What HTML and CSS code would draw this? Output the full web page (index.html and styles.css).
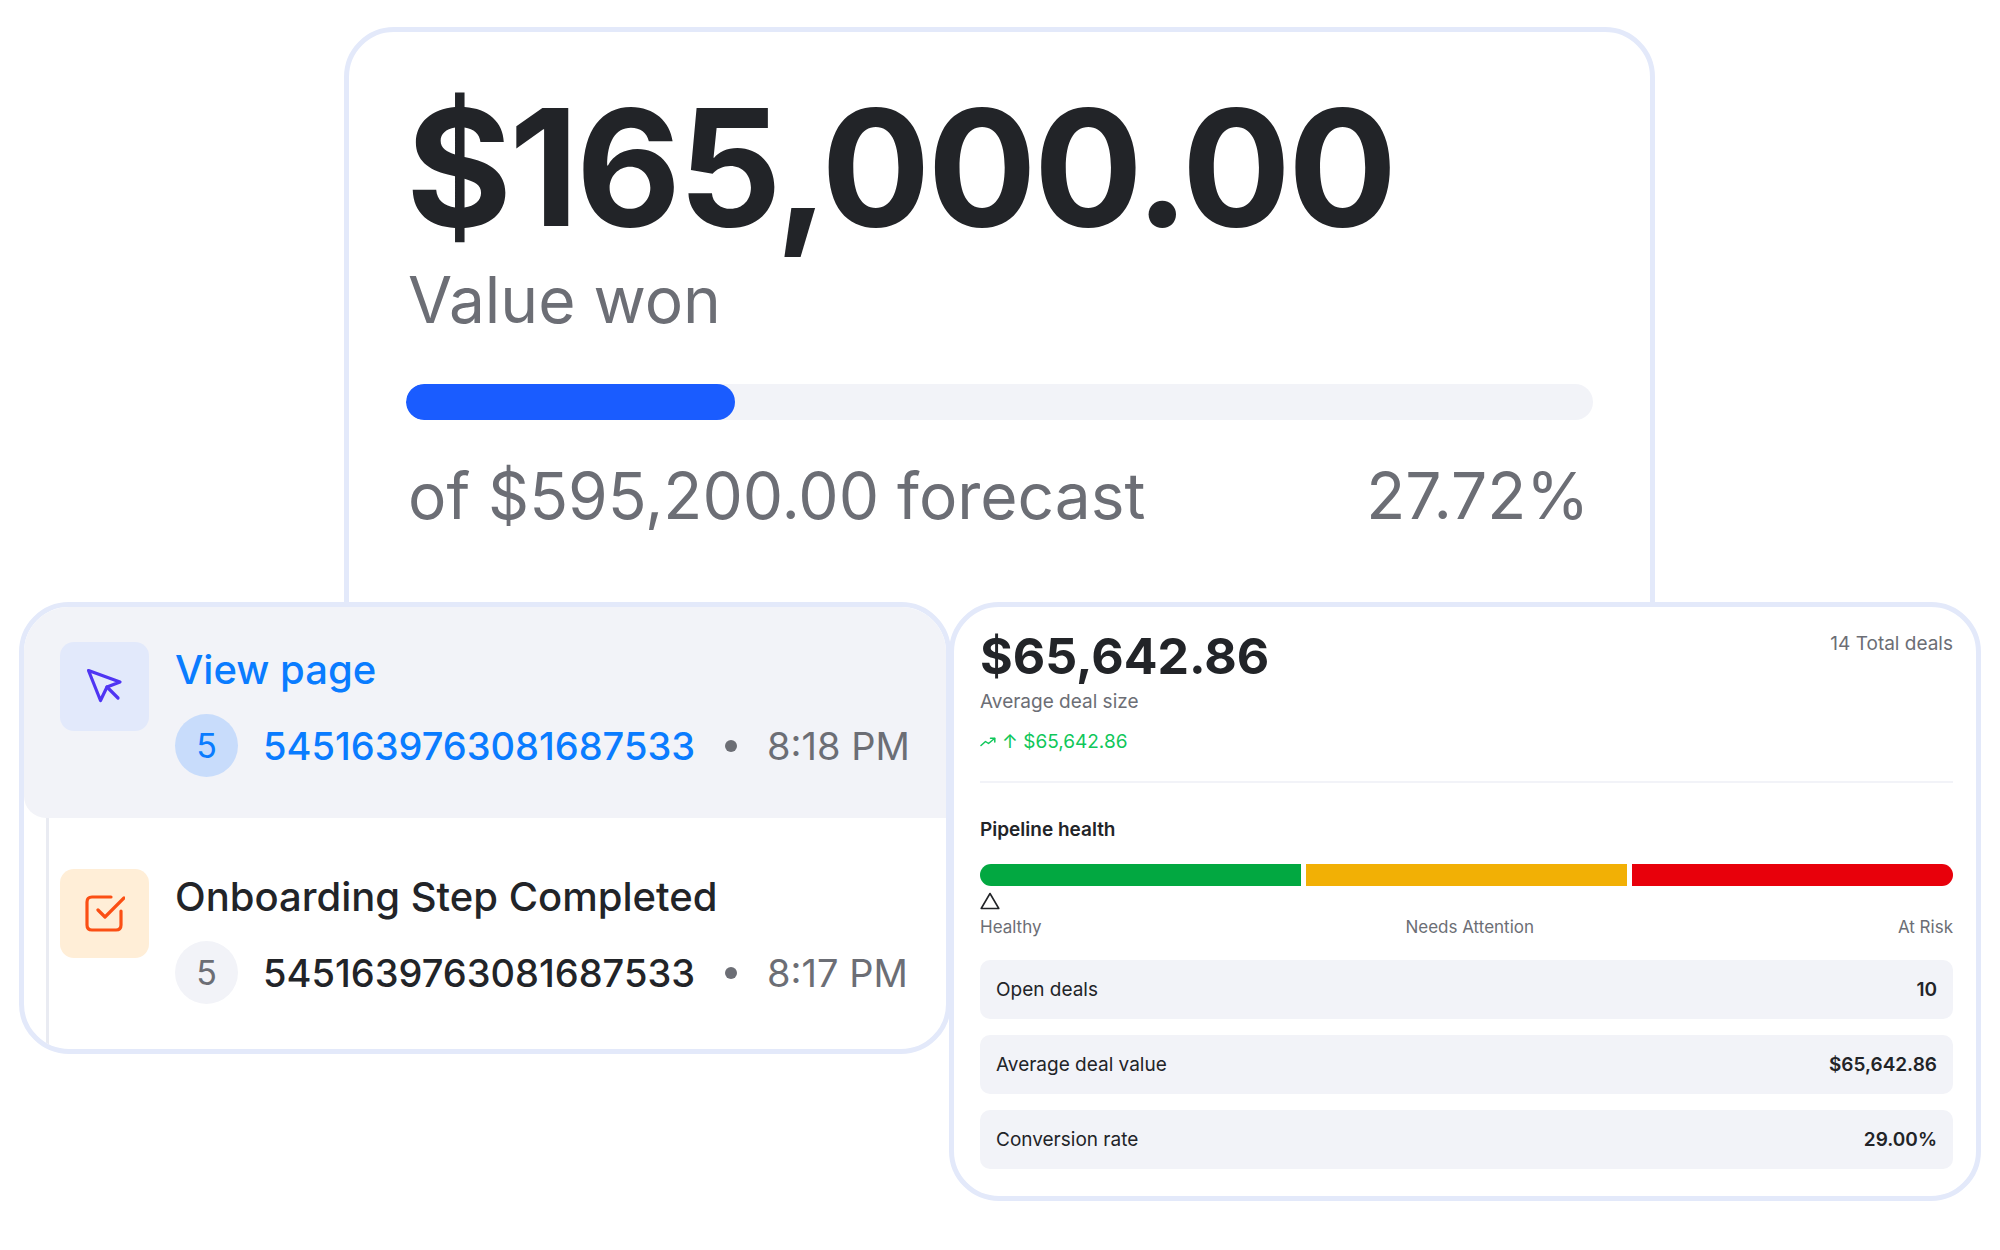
FILE: index.html
```html
<!DOCTYPE html>
<html lang="en">
<head>
  <meta charset="UTF-8" />
  <title>Deals overview</title>
  <link rel="stylesheet" href="styles.css">
</head>
<body>
  <div class="canvas">

    <!-- forecast card, sits behind the other two -->
    <section class="card forecast">
      <div class="won-value">$165,000.00</div>
      <div class="won-label">Value won</div>
      <div class="progress"><div class="progress-fill" style="width: 27.72%"></div></div>
      <div class="forecast-row">
        <span>of $595,200.00 forecast</span>
        <span>27.72%</span>
      </div>
    </section>

    <!-- activity card -->
    <section class="card activity">
      <div class="event event-active">
        <div class="event-icon icon-blue">
          <svg width="40" height="40" viewBox="0 0 40 40" fill="none" stroke="#4f35f3" stroke-width="3.2" stroke-linecap="round" stroke-linejoin="round">
            <path d="M3.5 3.5 L35 15 L22 20 L15.5 33.5 Z"/>
            <path d="M22 20 L33 31"/>
          </svg>
        </div>
        <div class="event-body">
          <div class="event-title link">View page</div>
          <div class="event-meta">
            <span class="count count-blue">5</span>
            <span class="event-id link">5451639763081687533</span>
            <span class="dot"></span>
            <span class="event-time">8:18 PM</span>
          </div>
        </div>
      </div>
      <div class="event">
        <div class="event-icon icon-orange">
          <svg width="40" height="40" viewBox="0 0 40 40" fill="none" stroke="#fb4f14" stroke-width="3.2" stroke-linecap="round" stroke-linejoin="round">
            <path d="M26 3 H7 Q2 3 2 8 V31 Q2 36 7 36 H31 Q36 36 36 31 V17"/>
            <path d="M13 16 L20 23 L39 4"/>
          </svg>
        </div>
        <div class="event-body">
          <div class="event-title">Onboarding Step Completed</div>
          <div class="event-meta">
            <span class="count">5</span>
            <span class="event-id">5451639763081687533</span>
            <span class="dot"></span>
            <span class="event-time">8:17 PM</span>
          </div>
        </div>
      </div>
    </section>

    <!-- deal stats card -->
    <section class="card stats">
      <div class="stats-head">
        <div>
          <div class="stats-value">$65,642.86</div>
          <div class="stats-label">Average deal size</div>
          <div class="stats-trend">
            <svg width="16" height="10" viewBox="0 0 16 10" fill="none" stroke="#0fc75a" stroke-width="1.5" stroke-linecap="round" stroke-linejoin="round">
              <path d="M1 8.5 L5.5 4.5 L8.5 6.5 L14.5 1.5"/>
              <path d="M10.5 1.2 H14.8 V5"/>
            </svg>
            <span>↑ $65,642.86</span>
          </div>
        </div>
        <div class="stats-total">14 Total deals</div>
      </div>

      <div class="health-title">Pipeline health</div>
      <div class="health-bar">
        <div class="seg seg-green"></div>
        <div class="seg seg-amber"></div>
        <div class="seg seg-red"></div>
      </div>
      <svg class="marker" width="20" height="18" viewBox="0 0 20 18" fill="none" stroke="#222428" stroke-width="1.6" stroke-linejoin="round">
        <path d="M10 1.5 L18.8 16.5 H1.2 Z"/>
      </svg>
      <div class="health-labels">
        <span>Healthy</span>
        <span>Needs Attention</span>
        <span>At Risk</span>
      </div>

      <div class="stat-rows">
        <div class="stat-row"><span>Open deals</span><b>10</b></div>
        <div class="stat-row"><span>Average deal value</span><b>$65,642.86</b></div>
        <div class="stat-row"><span>Conversion rate</span><b>29.00%</b></div>
      </div>
    </section>

  </div>
</body>
</html>
```

FILE: styles.css
```css
* { margin: 0; padding: 0; box-sizing: border-box; }

body {
  font-family: 'Inter', 'Liberation Sans', sans-serif;
  background: #fff;
  color: #222428;
}

.canvas {
  position: relative;
  width: 2000px;
  height: 1250px;
  overflow: hidden;
}

.card {
  position: absolute;
  background: #fff;
  border: 5px solid #e3e9fa;
  border-radius: 50px;
}

/* forecast card */
.forecast {
  left: 344px;
  top: 27px;
  width: 1311px;
  height: 640px;
  padding: 40px 57px 0 57px;
}

.won-value {
  font-size: 162px;
  font-weight: 700;
  line-height: 190px;
  letter-spacing: -3px;
}

.won-label {
  font-size: 64px;
  line-height: 76px;
  color: #6c6e75;
  margin-left: 2px;
}

.progress {
  height: 36px;
  margin-top: 46px;
  background: #f2f3f8;
  border-radius: 18px;
  overflow: hidden;
}

.progress-fill {
  height: 100%;
  background: #1a5cff;
  border-radius: 18px;
}

.forecast-row {
  display: flex;
  justify-content: space-between;
  margin: 38px 4px 0 2px;
  font-size: 64px;
  line-height: 76px;
  color: #6c6e75;
}

/* activity card */
.activity {
  left: 19px;
  top: 602px;
  width: 932px;
  height: 452px;
  overflow: hidden;
}

.activity::before {
  content: "";
  position: absolute;
  left: 22px;
  top: 211px;
  bottom: 0;
  width: 3px;
  background: #e9ebf2;
}

.event {
  position: relative;
  display: flex;
  gap: 26px;
  height: 227px;
  padding: 35px 0 0 36px;
}

.event-active {
  height: 211px;
  background: #f2f3f8;
  border-bottom-left-radius: 22px;
}

.event-active + .event {
  padding-top: 51px;
}

.event-icon {
  flex: none;
  width: 89px;
  height: 89px;
  border-radius: 14px;
  display: flex;
  align-items: center;
  justify-content: center;
}

.icon-blue { background: #e2e9fb; }
.icon-orange { background: #ffeed7; }

.event-title {
  font-size: 40px;
  font-weight: 500;
  line-height: 56px;
  white-space: nowrap;
}

.link { color: #0a7cff; }

.event-meta {
  display: flex;
  align-items: center;
  margin-top: 16px;
  font-size: 38px;
  white-space: nowrap;
}

.count {
  flex: none;
  width: 63px;
  height: 63px;
  border-radius: 50%;
  background: #f2f3f8;
  color: #6c6e75;
  font-size: 34px;
  display: flex;
  align-items: center;
  justify-content: center;
}

.count-blue {
  background: #c8dcfb;
  color: #0a7cff;
}

.event-id {
  margin-left: 25px;
  font-weight: 500;
}

.dot {
  width: 12px;
  height: 12px;
  margin: 0 30px 0 30px;
  border-radius: 50%;
  background: #6c6e75;
}

.event-time {
  color: #6c6e75;
}

/* stats card */
.stats {
  left: 949px;
  top: 602px;
  width: 1032px;
  height: 599px;
  padding: 19px 23px 0 26px;
}

.stats-head {
  display: flex;
  justify-content: space-between;
  align-items: flex-start;
  height: 157px;
  border-bottom: 2px solid #f2f3f8;
}

.stats-value {
  font-size: 50px;
  font-weight: 700;
  line-height: 60px;
}

.stats-label {
  font-size: 19px;
  line-height: 24px;
  margin-top: 4px;
  color: #6c6e75;
}

.stats-trend {
  display: flex;
  align-items: center;
  gap: 6px;
  margin-top: 16px;
  font-size: 19px;
  line-height: 24px;
  color: #0fc75a;
}

.stats-total {
  font-size: 19px;
  line-height: 24px;
  margin-top: 6px;
  color: #6c6e75;
}

.health-title {
  margin-top: 35px;
  font-size: 19px;
  font-weight: 600;
  line-height: 24px;
}

.health-bar {
  display: flex;
  gap: 5px;
  height: 22px;
  margin-top: 22px;
  border-radius: 11px;
  overflow: hidden;
}

.seg { flex: 1; }
.seg-green { background: #02a841; }
.seg-amber { background: #f2b005; }
.seg-red { background: #e8000b; }

.marker {
  display: block;
  margin-top: 6px;
}

.health-labels {
  display: flex;
  justify-content: space-between;
  margin-top: 5px;
  font-size: 17px;
  line-height: 24px;
  color: #6c6e75;
}

.stat-rows {
  display: flex;
  flex-direction: column;
  gap: 16px;
  margin-top: 21px;
}

.stat-row {
  display: flex;
  justify-content: space-between;
  align-items: center;
  height: 59px;
  padding: 0 16px;
  background: #f2f3f8;
  border-radius: 10px;
  font-size: 19px;
}

.stat-row b {
  font-weight: 600;
}
```
